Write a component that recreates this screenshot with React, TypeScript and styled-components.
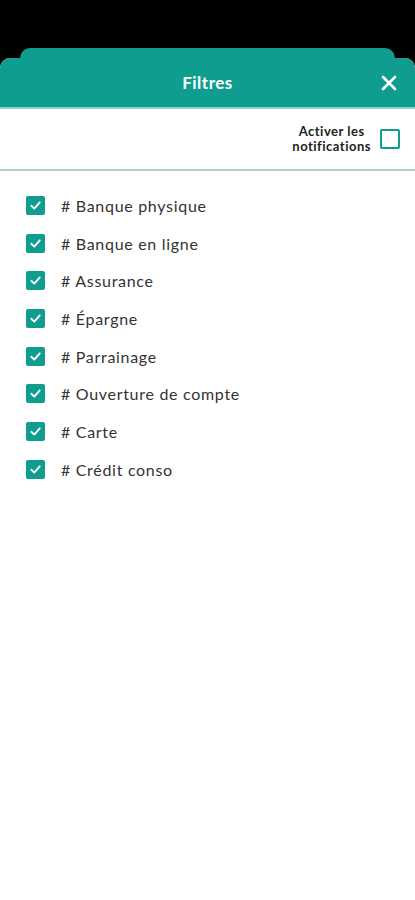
import { createGlobalStyle, styled } from "styled-components";

const teal = "#0f9d90";

const GlobalStyle = createGlobalStyle`
  html, body {
    margin: 0;
    padding: 0;
    background: #000;
  }
  body {
    font-family: Lato, "Open Sans", sans-serif;
  }
`;

const filters = [
  "# Banque physique",
  "# Banque en ligne",
  "# Assurance",
  "# Épargne",
  "# Parrainage",
  "# Ouverture de compte",
  "# Carte",
  "# Crédit conso",
];

function CheckMark() {
  return (
    <svg width="13" height="13" viewBox="0 0 14 14" fill="none">
      <path
        d="M2.5 7.3 L5.7 10.3 L11.6 3.6"
        stroke="#fff"
        strokeWidth="2"
        strokeLinecap="round"
        strokeLinejoin="round"
      />
    </svg>
  );
}

function CloseIcon() {
  return (
    <svg width="16" height="16" viewBox="0 0 16 16">
      <path
        d="M2 2 L14 14 M14 2 L2 14"
        stroke="#fff"
        strokeWidth="2.6"
        strokeLinecap="round"
      />
    </svg>
  );
}

export default function App() {
  return (
    <>
      <GlobalStyle />
      <Screen>
        <BackCard />
        <Sheet>
          <SheetHeader>
            <Title>Filtres</Title>
            <CloseButton aria-label="Fermer">
              <CloseIcon />
            </CloseButton>
          </SheetHeader>
          <NotifBar>
            <NotifLabel>
              Activer les
              <br />
              notifications
            </NotifLabel>
            <Box $checked={false} $size={20} />
          </NotifBar>
          <List>
            {filters.map((f) => (
              <Row key={f}>
                <Box $checked $size={19}>
                  <CheckMark />
                </Box>
                <Label>{f}</Label>
              </Row>
            ))}
          </List>
        </Sheet>
      </Screen>
    </>
  );
}

const Screen = styled.div`
  width: 415px;
  height: 900px;
  background: #000;
  display: flex;
  flex-direction: column;
  overflow: hidden;
  padding-top: 48px;
  box-sizing: border-box;
`;

const BackCard = styled.div`
  height: 14px;
  margin: 0 20px;
  background: ${teal};
  border-radius: 10px 10px 0 0;
  flex-shrink: 0;
`;

const Sheet = styled.div`
  flex: 1;
  margin-top: -4px;
  background: #fff;
  border-radius: 10px 10px 0 0;
  overflow: hidden;
  display: flex;
  flex-direction: column;
`;

const SheetHeader = styled.div`
  height: 49px;
  background: ${teal};
  border-bottom: 2px solid #8fd3ca;
  display: flex;
  align-items: center;
  justify-content: center;
  position: relative;
`;

const Title = styled.h1`
  margin: 0;
  color: #fff;
  font-size: 17px;
  font-weight: 700;
  letter-spacing: 0.5px;
`;

const CloseButton = styled.button`
  position: absolute;
  right: 18px;
  top: 17px;
  background: none;
  border: none;
  padding: 0;
  display: flex;
`;

const NotifBar = styled.div`
  height: 60px;
  border-bottom: 2px solid #aed0c8;
  display: flex;
  align-items: center;
  justify-content: flex-end;
  gap: 9px;
  padding-right: 15px;
`;

const NotifLabel = styled.div`
  color: #222;
  font-size: 13px;
  font-weight: 700;
  line-height: 15px;
  letter-spacing: 0.5px;
  text-align: center;
`;

const Box = styled.span<{ $checked: boolean; $size: number }>`
  width: ${(p) => p.$size}px;
  height: ${(p) => p.$size}px;
  box-sizing: border-box;
  border-radius: 2px;
  display: inline-flex;
  align-items: center;
  justify-content: center;
  flex-shrink: 0;
  background: ${(p) => (p.$checked ? teal : "#fff")};
  border: 2px solid ${teal};
`;

const List = styled.ul`
  list-style: none;
  margin: 0;
  padding: 25px 0 0 26px;
  display: flex;
  flex-direction: column;
  gap: 18.7px;
`;

const Row = styled.li`
  display: flex;
  align-items: center;
  gap: 16px;
  height: 19px;
`;

const Label = styled.span`
  color: #333;
  font-size: 16px;
  letter-spacing: 0.7px;
`;
